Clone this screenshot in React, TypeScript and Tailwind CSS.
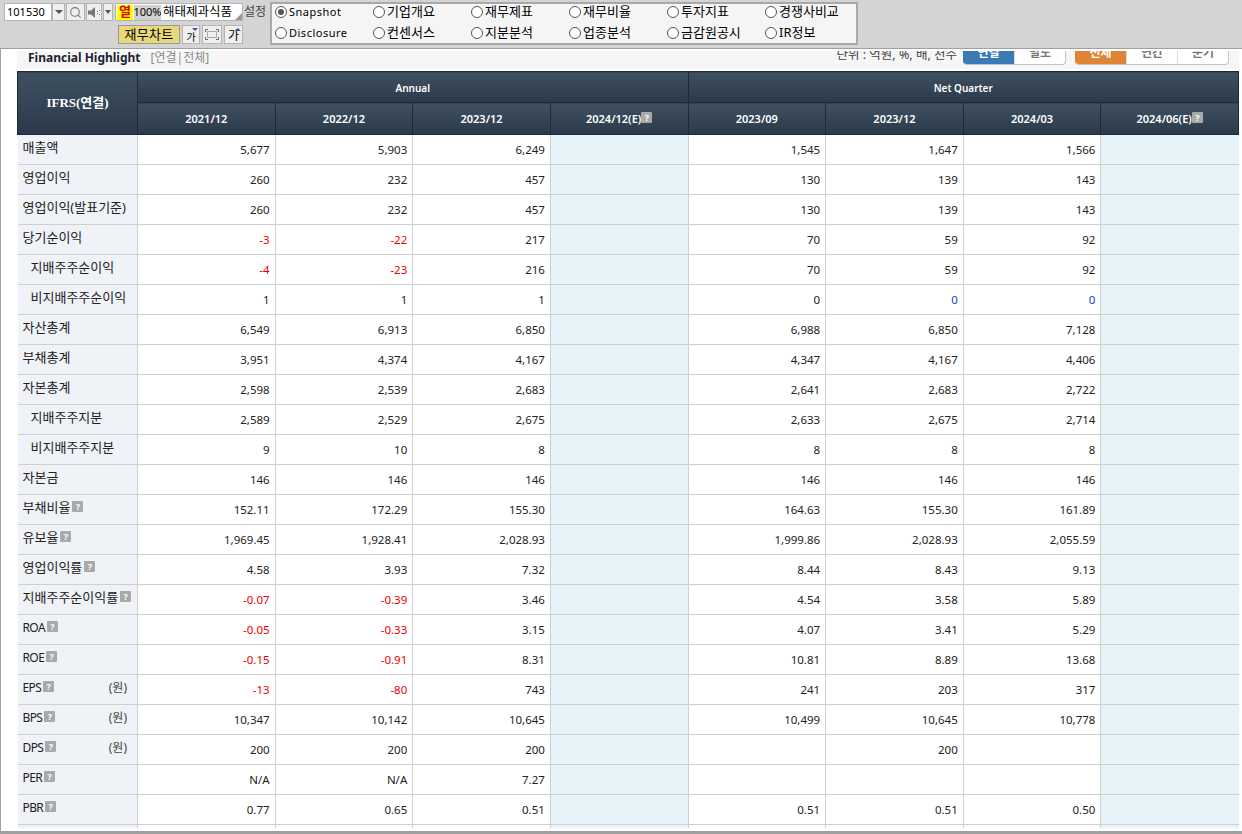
import { Search } from "lucide-react";

const FONT = "font-['Noto_Sans','Noto_Sans_CJK_KR',sans-serif]";

type Row = {
  label: string;
  sub?: boolean;
  help?: boolean;
  won?: boolean;
  annual: string[];
  quarter: string[];
};

const rows: Row[] = [
  { label: "매출액", annual: ["5,677", "5,903", "6,249"], quarter: ["1,545", "1,647", "1,566"] },
  { label: "영업이익", annual: ["260", "232", "457"], quarter: ["130", "139", "143"] },
  { label: "영업이익(발표기준)", annual: ["260", "232", "457"], quarter: ["130", "139", "143"] },
  { label: "당기순이익", annual: ["-3", "-22", "217"], quarter: ["70", "59", "92"] },
  { label: "지배주주순이익", sub: true, annual: ["-4", "-23", "216"], quarter: ["70", "59", "92"] },
  { label: "비지배주주순이익", sub: true, annual: ["1", "1", "1"], quarter: ["0", "0", "0"] },
  { label: "자산총계", annual: ["6,549", "6,913", "6,850"], quarter: ["6,988", "6,850", "7,128"] },
  { label: "부채총계", annual: ["3,951", "4,374", "4,167"], quarter: ["4,347", "4,167", "4,406"] },
  { label: "자본총계", annual: ["2,598", "2,539", "2,683"], quarter: ["2,641", "2,683", "2,722"] },
  { label: "지배주주지분", sub: true, annual: ["2,589", "2,529", "2,675"], quarter: ["2,633", "2,675", "2,714"] },
  { label: "비지배주주지분", sub: true, annual: ["9", "10", "8"], quarter: ["8", "8", "8"] },
  { label: "자본금", annual: ["146", "146", "146"], quarter: ["146", "146", "146"] },
  { label: "부채비율", help: true, annual: ["152.11", "172.29", "155.30"], quarter: ["164.63", "155.30", "161.89"] },
  { label: "유보율", help: true, annual: ["1,969.45", "1,928.41", "2,028.93"], quarter: ["1,999.86", "2,028.93", "2,055.59"] },
  { label: "영업이익률", help: true, annual: ["4.58", "3.93", "7.32"], quarter: ["8.44", "8.43", "9.13"] },
  { label: "지배주주순이익률", help: true, annual: ["-0.07", "-0.39", "3.46"], quarter: ["4.54", "3.58", "5.89"] },
  { label: "ROA", help: true, annual: ["-0.05", "-0.33", "3.15"], quarter: ["4.07", "3.41", "5.29"] },
  { label: "ROE", help: true, annual: ["-0.15", "-0.91", "8.31"], quarter: ["10.81", "8.89", "13.68"] },
  { label: "EPS", help: true, won: true, annual: ["-13", "-80", "743"], quarter: ["241", "203", "317"] },
  { label: "BPS", help: true, won: true, annual: ["10,347", "10,142", "10,645"], quarter: ["10,499", "10,645", "10,778"] },
  { label: "DPS", help: true, won: true, annual: ["200", "200", "200"], quarter: ["", "200", ""] },
  { label: "PER", help: true, annual: ["N/A", "N/A", "7.27"], quarter: ["", "", ""] },
  { label: "PBR", help: true, annual: ["0.77", "0.65", "0.51"], quarter: ["0.51", "0.51", "0.50"] },
];

const radios = [
  ["Snapshot", "기업개요", "재무제표", "재무비율", "투자지표", "경쟁사비교"],
  ["Disclosure", "컨센서스", "지분분석", "업종분석", "금감원공시", "IR정보"],
];

function Help({ tight }: { tight?: boolean }) {
  return (
    <span
      className={`inline-flex h-[11px] w-[11px] items-center justify-center rounded-[1px] bg-[#a9a9a9] align-[2px] text-[9px] font-bold leading-none tracking-normal text-white ${tight ? "ml-0" : "ml-[2px]"}`}
    >
      ?
    </span>
  );
}

function Radio({ checked }: { checked?: boolean }) {
  return (
    <span className="flex h-[12px] w-[12px] shrink-0 items-center justify-center rounded-full border border-[#555] bg-white">
      {checked && <span className="h-[6px] w-[6px] rounded-full bg-[#555]" />}
    </span>
  );
}

function ToolButton({ className, children }: { className: string; children?: React.ReactNode }) {
  return (
    <div className={`flex shrink-0 items-center justify-center border border-[#b4b4b4] bg-[#efefef] ${className}`}>
      {children}
    </div>
  );
}

function Caret() {
  return <span className="h-0 w-0 border-x-[4px] border-t-[4px] border-x-transparent border-t-[#555]" />;
}

function Toolbar() {
  return (
    <div className={`flex h-[49px] shrink-0 border-b border-[#a0a0a0] bg-[#d4d4d4] pl-[4px] pt-[3px] text-[13px] text-black ${FONT}`}>
      <div className="w-[266px] shrink-0">
        <div className="flex h-[18px] items-center">
          <div className="flex h-[18px] w-[48px] shrink-0 items-center border border-[#b4b4b4] bg-white pl-[2px] text-[11px]">101530</div>
          <ToolButton className="h-[18px] w-[13px]"><Caret /></ToolButton>
          <ToolButton className="ml-[1px] h-[18px] w-[19px]"><Search size={13} strokeWidth={2} className="text-[#777]" /></ToolButton>
          <ToolButton className="ml-[1px] h-[18px] w-[16px]">
            <svg width="13" height="11" viewBox="0 0 13 11">
              <path d="M0 3.5h3L7 0v11L3 7.5H0z" fill="#777" />
              <path d="M9 4h1v1H9zM9 6h1v1H9zM11 3h1v1h-1zM11 7h1v1h-1z" fill="#777" />
            </svg>
          </ToolButton>
          <ToolButton className="ml-[1px] h-[18px] w-[10px]">
            <span className="h-0 w-0 border-x-[3px] border-t-[4px] border-x-transparent border-t-[#555]" />
          </ToolButton>
          <div className="relative ml-[2px] flex h-[18px] w-[128px] shrink-0 items-center border border-[#b4b4b4] bg-white pl-[1px]">
            <span className="flex h-[15px] w-[16px] shrink-0 items-center justify-center bg-[#ffff00] font-bold text-[#e00000]">열</span>
            <span className="ml-[1px] flex h-[15px] w-[27px] shrink-0 items-center justify-center bg-[#d0d0d0] text-[11px]">100%</span>
            <span className="ml-[2px] whitespace-nowrap text-[12.5px]">해태제과식품</span>
            <span className="absolute bottom-0 right-0 h-0 w-0 border-b-[7px] border-l-[7px] border-b-[#999] border-l-transparent" />
          </div>
          <span className="ml-[1px] shrink-0 whitespace-nowrap text-[12px] text-[#444]">설정</span>
        </div>
        <div className="mt-[4px] flex h-[19px] items-center">
          <div className="ml-[114px] flex h-[19px] w-[62px] shrink-0 items-center justify-center border border-[#999] bg-[#e8d87c] tracking-[0.3px]">재무차트</div>
          <ToolButton className="relative ml-[2px] h-[19px] w-[18px]">
            <span className="mt-[4px] text-[10px] leading-none">가</span>
            <span className="absolute right-[1px] top-[2px] h-0 w-0 border-x-[3px] border-t-[3px] border-x-transparent border-t-[#3a5a90]" />
          </ToolButton>
          <ToolButton className="ml-[2px] h-[19px] w-[20px]">
            <svg width="14" height="11" viewBox="0 0 14 11" fill="none" stroke="#666">
              <path d="M.5 3V.5H3M11 .5h2.5V3M13.5 8v2.5H11M3 10.5H.5V8" />
              <rect x="2.5" y="2.5" width="9" height="6" stroke="#aaa" />
            </svg>
          </ToolButton>
          <ToolButton className="relative ml-[2px] h-[19px] w-[19px]">
            <span className="mt-[3px] text-[12px] leading-none">가</span>
            <span className="absolute right-[1px] top-[2px] h-0 w-0 border-x-[3px] border-b-[3px] border-x-transparent border-b-[#3a5a90]" />
          </ToolButton>
        </div>
      </div>
      <div className="h-[43px] w-[588px] shrink-0 -translate-y-px border-2 border-[#a8a8a8] bg-[#f5f5f5] pl-[3px] pt-[1px]">
        <div className="flex flex-col gap-[7px]">
          {radios.map((row, i) => (
            <div key={i} className="flex h-[14px] items-center">
              {row.map((text, j) => (
                <div key={text} className="flex w-[98px] shrink-0 items-center gap-[2px]">
                  <Radio checked={i === 0 && j === 0} />
                  <span className={`whitespace-nowrap ${j === 0 ? "text-[11px] tracking-[0.5px]" : ""}`}>{text}</span>
                </div>
              ))}
            </div>
          ))}
        </div>
      </div>
    </div>
  );
}

function SegmentGroup({ items, color }: { items: string[]; color: string }) {
  return (
    <div className="flex h-[24px] overflow-hidden rounded-b-[4px] border-b border-r border-[#c4c4c4] bg-white">
      {items.map((text, i) => (
        <div
          key={text}
          className={`flex w-[51px] items-center justify-center font-bold ${i === 0 ? color + " text-white" : "border-l border-[#ddd] text-[#777]"}`}
        >
          {text}
        </div>
      ))}
    </div>
  );
}

function SectionHead() {
  return (
    <div className="-mt-[4px] flex h-[22px] w-[1222px] items-start justify-between bg-[#f6f6f6] pr-[10px] text-[12px]">
      <div className="flex h-[20px] items-center pl-[11px] pt-[1px]">
        <span className="font-bold text-[#1c2230]">Financial Highlight</span>
        <span className="ml-[10px] text-[#8a8a8a]">[연결|전체]</span>
      </div>
      <div className="flex items-start">
        <span className="text-[12.5px] leading-[16px] text-[#444]">단위 : 억원, %, 배, 천주</span>
        <div className="ml-[6px] -mt-[6px] flex">
          <SegmentGroup items={["연결", "별도"]} color="bg-[#3a7ab5]" />
          <div className="w-[9px]" />
          <SegmentGroup items={["전체", "연간", "분기"]} color="bg-[#dd8435]" />
        </div>
      </div>
    </div>
  );
}

const headCell =
  "border border-[#1e2a36] bg-gradient-to-b from-[#3f5061] to-[#2a3a4a] text-center font-semibold text-white";

const line = "border-b border-r border-[#cfcfcf]";

function FinTable() {
  const annualHead = ["2021/12", "2022/12", "2023/12"];
  const quarterHead = ["2023/09", "2023/12", "2024/03"];
  const numClass = (v: string) => {
    const color = v.startsWith("-") ? "text-[#ee0000]" : "text-[#222]";
    return `${line} pr-[5px] text-right text-[11.5px] ${color}`;
  };
  const zeroBlue = (r: Row, j: number) => r.label === "비지배주주순이익" && j > 0;

  return (
    <table className="mt-[2px] w-[1222px] table-fixed border-collapse text-[12px]">
      <colgroup>
        <col className="w-[120px]" />
      </colgroup>
      <thead>
        <tr className="h-[31px]">
          <th rowSpan={2} className={headCell + " !font-bold"}>
            <span className="font-['Liberation_Serif','Noto_Sans_CJK_KR',serif] text-[13px]">IFRS(연결)</span>
          </th>
          <th colSpan={4} className={headCell + " pt-[3px] text-[10px]"}>Annual</th>
          <th colSpan={4} className={headCell + " pt-[3px] text-[10px]"}>Net Quarter</th>
        </tr>
        <tr className="h-[32px] text-[11px]">
          {annualHead.map((h) => <th key={h} className={headCell + " pt-[1px]"}>{h}</th>)}
          <th className={headCell + " pt-[1px]"}>2024/12(E)<Help tight /></th>
          {quarterHead.map((h) => <th key={h} className={headCell + " pt-[1px]"}>{h}</th>)}
          <th className={headCell + " pt-[1px]"}>2024/06(E)<Help tight /></th>
        </tr>
      </thead>
      <tbody className="text-[#222]">
        {rows.map((r) => (
          <tr key={r.label} className="h-[30px]">
            <td className={`${line} bg-[#eff2f7] pb-[3px] ${r.sub ? "pl-[13px]" : "pl-[5px]"}`}>
              <div className="flex items-center justify-between whitespace-nowrap pr-[10px]">
                <span className={r.help && /^[A-Z]+$/.test(r.label) ? "text-[12px] tracking-[-0.6px]" : "text-[13px]"}>
                  {r.label}
                  {r.help && <Help />}
                </span>
                {r.won && <span className="text-[#444]">(원)</span>}
              </div>
            </td>
            {r.annual.map((v, j) => <td key={j} className={numClass(v)}>{v}</td>)}
            <td className={`${line} bg-[#e6f4fa]`} />
            {r.quarter.map((v, j) => (
              <td key={j} className={`${numClass(v)} ${zeroBlue(r, j) ? "!text-[#1a3fbf]" : ""}`}>{v}</td>
            ))}
            <td className="border-b border-[#cfcfcf] bg-[#e6f4fa]" />
          </tr>
        ))}
        <tr className="h-[30px]">
          <td className="border-r border-[#cfcfcf] bg-[#eff2f7]" />
          <td className="border-r border-[#cfcfcf]" />
          <td className="border-r border-[#cfcfcf]" />
          <td className="border-r border-[#cfcfcf]" />
          <td className="border-r border-[#cfcfcf] bg-[#e6f4fa]" />
          <td className="border-r border-[#cfcfcf]" />
          <td className="border-r border-[#cfcfcf]" />
          <td className="border-r border-[#cfcfcf]" />
          <td className="bg-[#e6f4fa]" />
        </tr>
      </tbody>
    </table>
  );
}

export default function App() {
  return (
    <div className={`flex h-[834px] w-[1242px] flex-col overflow-hidden bg-white ${FONT}`}>
      <Toolbar />
      <div className="min-h-0 flex-1 border-l border-[#a0a0a0] pb-[3px] pl-[16px] pt-[2px]">
        <div className="h-full overflow-hidden">
          <SectionHead />
          <FinTable />
        </div>
      </div>
      <div className="h-[3px] shrink-0 bg-[#a0a0a0]" />
    </div>
  );
}
